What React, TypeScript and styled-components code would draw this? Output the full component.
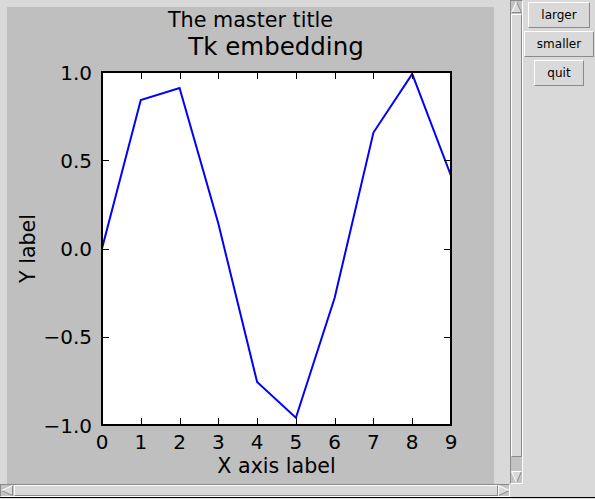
import styled, { createGlobalStyle } from "styled-components";

const GlobalStyle = createGlobalStyle`
  html, body {
    margin: 0;
    background: #d9d9d9;
    font-family: "DejaVu Sans", Verdana, sans-serif;
  }
`;

const Window = styled.div`
  display: flex;
  width: 595px;
  height: 497px;
  border-bottom: 1px solid #000;
  background: #d9d9d9;
`;

const CanvasArea = styled.div`
  display: grid;
  grid-template-columns: 510px 13px;
  grid-template-rows: 484px 13px;
`;

const Canvas = styled.div`
  overflow: hidden;
  padding: 7px 0 0 7px;
  background: #d9d9d9;
`;

const Figure = styled.div`
  display: flex;
  flex-direction: column;
  width: 487px;
  height: 488px;
  background: #bfbfbf;
`;

const Suptitle = styled.div`
  height: 26px;
  line-height: 26px;
  text-align: center;
  font-size: 20.7px;
  color: #000;
`;

const Scrollbar = styled.div<{ $vertical?: boolean }>`
  display: flex;
  flex-direction: ${(p) => (p.$vertical ? "column" : "row")};
  background: #c3c3c3;
  border: 1px solid;
  border-color: #8a8a8a #fff #fff #8a8a8a;
  overflow: hidden;
`;

const Slider = styled.div<{ $length: number; $vertical?: boolean }>`
  flex: none;
  box-sizing: border-box;
  ${(p) =>
    p.$vertical
      ? `height: ${p.$length}px; margin-top: 1px;`
      : `width: ${p.$length}px; margin-left: 1px;`}
  background: #d9d9d9;
  border: 1px solid;
  border-color: #fff #8a8a8a #8a8a8a #fff;
`;

const Spacer = styled.div`
  flex: 1;
`;

const Corner = styled.div`
  background: #d9d9d9;
`;

const ButtonColumn = styled.div`
  flex: 1;
  display: flex;
  flex-direction: column;
  align-items: center;
  gap: 3px;
  padding-top: 2px;
`;

const TkButton = styled.button`
  height: 26px;
  padding: 0 12px;
  font-family: "DejaVu Sans", Verdana, sans-serif;
  font-size: 12px;
  color: #000;
  background: #d9d9d9;
  border: 1px solid;
  border-color: #fff #8a8a8a #8a8a8a #fff;
  cursor: pointer;
`;

type Dir = "up" | "down" | "left" | "right";

// Tk-style scrollbar arrow: a bevelled triangle over the trough
const Arrow = ({ dir }: { dir: Dir }) => {
  const vert = dir === "up" || dir === "down";
  const w = vert ? 11 : 12;
  const h = vert ? 12 : 11;
  const shapes: Record<Dir, { pts: number[][]; light: number[][]; dark: number[][] }> = {
    up: {
      pts: [[5.5, 0.5], [0.5, 11.5], [10.5, 11.5]],
      light: [[0.5, 11.5], [5.5, 0.5]],
      dark: [[5.5, 0.5], [10.5, 11.5], [0.5, 11.5]],
    },
    down: {
      pts: [[0.5, 0.5], [10.5, 0.5], [5.5, 11.5]],
      light: [[5.5, 11.5], [0.5, 0.5], [10.5, 0.5]],
      dark: [[10.5, 0.5], [5.5, 11.5]],
    },
    left: {
      pts: [[0.5, 5.5], [11.5, 0.5], [11.5, 10.5]],
      light: [[0.5, 5.5], [11.5, 0.5]],
      dark: [[11.5, 0.5], [11.5, 10.5], [0.5, 5.5]],
    },
    right: {
      pts: [[0.5, 0.5], [11.5, 5.5], [0.5, 10.5]],
      light: [[0.5, 10.5], [0.5, 0.5], [11.5, 5.5]],
      dark: [[11.5, 5.5], [0.5, 10.5]],
    },
  };
  const s = (a: number[][]) => a.map((p) => `${p[0]},${p[1]}`).join(" ");
  const { pts, light, dark } = shapes[dir];
  return (
    <svg width={w} height={h} style={{ flex: "none" }}>
      <polygon points={s(pts)} fill="#d9d9d9" />
      <polyline points={s(dark)} fill="none" stroke="#8a8a8a" />
      <polyline points={s(light)} fill="none" stroke="#fff" />
    </svg>
  );
};

// axes geometry, in page pixels
const X0 = 102;
const X1 = 451;
const Y0 = 72;
const Y1 = 425;
const xs = (v: number) => X0 + (v * (X1 - X0)) / 9;
const ys = (v: number) => (Y0 + Y1) / 2 - (v * (Y1 - Y0)) / 2;

const data = Array.from({ length: 10 }, (_, i) => [i, Math.sin(i)]);
const yTicks = [
  [1, "1.0"],
  [0.5, "0.5"],
  [0, "0.0"],
  [-0.5, "\u22120.5"],
  [-1, "\u22121.0"],
] as const;

const Chart = () => (
  <svg width={487} height={462} viewBox="7 33 487 462" style={{ display: "block" }}>
    <defs>
      <clipPath id="axclip">
        <rect x={X0} y={Y0} width={X1 - X0} height={Y1 - Y0} />
      </clipPath>
    </defs>
    <text x={276} y={55} fontSize={24.5} textAnchor="middle" fontFamily="DejaVu Sans">
      Tk embedding
    </text>
    <rect x={X0} y={Y0} width={X1 - X0} height={Y1 - Y0} fill="#fff" />
    <polyline
      clipPath="url(#axclip)"
      points={data.map(([x, y]) => `${xs(x)},${ys(y)}`).join(" ")}
      fill="none"
      stroke="#0000ff"
      strokeWidth={2}
    />
    <g stroke="#000" strokeWidth={1}>
      {data.map(([x]) => (
        <g key={x}>
          <line x1={Math.round(xs(x)) + 0.5} x2={Math.round(xs(x)) + 0.5} y1={Y1} y2={Y1 - 7} />
          <line x1={Math.round(xs(x)) + 0.5} x2={Math.round(xs(x)) + 0.5} y1={Y0} y2={Y0 + 7} />
        </g>
      ))}
      {yTicks.map(([v]) => (
        <g key={v}>
          <line x1={X0} x2={X0 + 7} y1={Math.round(ys(v)) + 0.5} y2={Math.round(ys(v)) + 0.5} />
          <line x1={X1} x2={X1 - 7} y1={Math.round(ys(v)) + 0.5} y2={Math.round(ys(v)) + 0.5} />
        </g>
      ))}
    </g>
    <rect x={X0} y={Y0} width={X1 - X0} height={Y1 - Y0} fill="none" stroke="#000" strokeWidth={2} />
    <g fontSize={20} fontFamily="DejaVu Sans" fill="#000">
      {yTicks.map(([v, label]) => (
        <text key={v} x={92} y={ys(v) + 7.5} textAnchor="end">
          {label}
        </text>
      ))}
      {data.map(([x]) => (
        <text key={x} x={xs(x)} y={449} textAnchor="middle">
          {x}
        </text>
      ))}
      <text x={276.5} y={473} textAnchor="middle" fontSize={20.6}>
        X axis label
      </text>
      <text x={35} y={248.5} textAnchor="middle" fontSize={20.6} transform="rotate(-90 35 248.5)">
        Y label
      </text>
    </g>
  </svg>
);

export default function App() {
  return (
    <>
      <GlobalStyle />
      <Window>
        <CanvasArea>
          <Canvas>
            <Figure>
              <Suptitle>The master title</Suptitle>
              <Chart />
            </Figure>
          </Canvas>
          <Scrollbar $vertical>
            <Arrow dir="up" />
            <Slider $vertical $length={443} />
            <Spacer />
            <Arrow dir="down" />
          </Scrollbar>
          <Scrollbar>
            <Arrow dir="left" />
            <Slider $length={484} />
            <Spacer />
            <Arrow dir="right" />
          </Scrollbar>
          <Corner />
        </CanvasArea>
        <ButtonColumn>
          <TkButton>larger</TkButton>
          <TkButton>smaller</TkButton>
          <TkButton>quit</TkButton>
        </ButtonColumn>
      </Window>
    </>
  );
}
